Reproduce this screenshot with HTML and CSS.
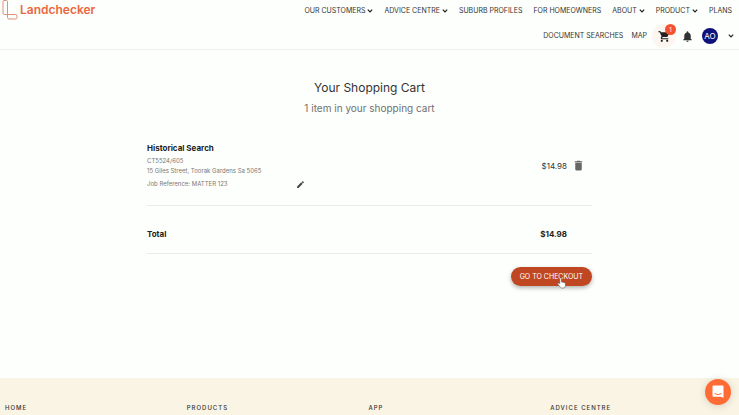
FILE: index.html
```html
<!DOCTYPE html>
<html lang="en">
<head>
  <meta charset="UTF-8" />
  <meta name="viewport" content="width=device-width, initial-scale=1" />
  <title>Landchecker - Shopping Cart</title>
  <link rel="stylesheet" href="styles.css">
</head>
<body>
  <header class="header">
    <a class="logo" href="#">
      <svg class="logo-mark" viewBox="0 0 16 20" aria-hidden="true">
        <path d="M1 1.500Q1 .5 2 .5H4.500Q5.500 .5 5.500 1.500V14.500H13.500Q15 14.500 15 16V17.500Q15 19 13.500 19H7Q5.500 19 5.500 17.500V14.500H2.500Q1 14.500 1 13Z" />
      </svg>
      <span>Landchecker</span>
    </a>
    <div class="menus">
      <nav class="nav">
        <a href="#">OUR CUSTOMERS <svg class="chevron" viewBox="0 0 6 4"><path d="M.8.7 3 2.900 5.200.7" /></svg></a>
        <a href="#">ADVICE CENTRE <svg class="chevron" viewBox="0 0 6 4"><path d="M.8.7 3 2.900 5.200.7" /></svg></a>
        <a href="#">SUBURB PROFILES</a>
        <a href="#">FOR HOMEOWNERS</a>
        <a href="#">ABOUT <svg class="chevron" viewBox="0 0 6 4"><path d="M.8.7 3 2.900 5.200.7" /></svg></a>
        <a href="#">PRODUCT <svg class="chevron" viewBox="0 0 6 4"><path d="M.8.7 3 2.900 5.200.7" /></svg></a>
        <a href="#">PLANS</a>
      </nav>
      <nav class="nav user-nav">
        <a href="#">DOCUMENT SEARCHES</a>
        <a href="#">MAP</a>
        <div class="tools">
          <button class="cart-button" type="button" aria-label="Cart">
            <svg viewBox="0 0 24 24"><path d="M7 18c-1.100 0-2 .9-2 2s.9 2 2 2 2-.9 2-2-.9-2-2-2zM1 2v2h2l3.600 7.600-1.350 2.450C4.500 15.370 5.480 17 7 17h12v-2H7.400l1.150-2h7.450c.75 0 1.410-.41 1.750-1.030L21.700 4H5.200l-.94-2H1zm16 16c-1.100 0-2 .9-2 2s.9 2 2 2 2-.9 2-2-.9-2-2-2z" /></svg>
            <span class="badge">1</span>
          </button>
          <button class="icon-button" type="button" aria-label="Notifications">
            <svg viewBox="0 0 24 24"><path d="M12 22c1.100 0 2-.9 2-2h-4c0 1.100.9 2 2 2zm6-6v-5c0-3.070-1.640-5.640-4.500-6.320V4a1.500 1.500 0 0 0-3 0v.68C7.630 5.360 6 7.920 6 11v5l-2 2v1h16v-1l-2-2z" /></svg>
          </button>
          <button class="account" type="button" aria-label="Account menu">
            <span class="avatar">AO</span>
            <svg class="chevron" viewBox="0 0 6 4"><path d="M.8.7 3 2.900 5.200.7" /></svg>
          </button>
        </div>
      </nav>
    </div>
  </header>

  <main class="cart">
    <h1>Your Shopping Cart</h1>
    <p class="subtitle">1 item in your shopping cart</p>

    <section class="item">
      <div class="item-info">
        <h2>Historical Search</h2>
        <p>CT5524/605</p>
        <p>15 Giles Street, Toorak Gardens Sa 5065</p>
        <div class="reference">
          <span>Job Reference: MATTER 123</span>
          <button class="icon-button edit" type="button" aria-label="Edit job reference">
            <svg viewBox="0 0 24 24"><path d="M3 17.250V21h3.750L17.810 9.940l-3.750-3.750L3 17.250zM20.710 7.040a1 1 0 0 0 0-1.410l-2.340-2.340a1 1 0 0 0-1.410 0l-1.830 1.830 3.750 3.750 1.830-1.830z" /></svg>
          </button>
        </div>
      </div>
      <span class="price">$14.98</span>
      <button class="icon-button delete" type="button" aria-label="Remove item">
        <svg viewBox="0 0 24 24"><path d="M6 19c0 1.100.9 2 2 2h8c1.100 0 2-.9 2-2V7H6v12zM19 4h-3.500l-1-1h-5l-1 1H5v2h14V4z" /></svg>
      </button>
    </section>

    <section class="total">
      <span>Total</span>
      <span>$14.98</span>
    </section>

    <div class="actions">
      <button class="checkout" type="button">
        GO TO CHECKOUT
        <svg class="pointer" viewBox="0 0 16 20" aria-hidden="true"><path d="M5 11V2.500a1.500 1.500 0 0 1 3 0V8l5 1.200q2 .6 2 2.800v3q0 4-4 4H8.500Q7 19 6 17.500L1.500 12q-.8-1.500.5-2t3 1z" /></svg>
      </button>
    </div>
  </main>

  <footer class="footer">
    <h3>HOME</h3>
    <h3>PRODUCTS</h3>
    <h3>APP</h3>
    <h3>ADVICE CENTRE</h3>
  </footer>

  <button class="chat" type="button" aria-label="Open chat">
    <svg viewBox="0 0 12 14"><path class="chat-box" d="M1.500.5h9q1 0 1 1V13L9 11.800H1.500q-1 0-1-1V1.500q0-1 1-1z" /><path class="chat-smile" d="M2.500 8.500q3.500 2.400 7 0" /></svg>
  </button>
</body>
</html>
```
FILE: styles.css
```css
* {
  box-sizing: border-box;
}
body {
  font-family: Inter, 'Liberation Sans', sans-serif;
  font-size: 7px;
  line-height: 10px;
  color: #333;
  background: #fdfffc;
  margin: 0;
  min-height: 100vh;
  display: flex;
  flex-direction: column;
}
h1, h2, h3, p {
  margin: 0;
  font-weight: 400;
}
a {
  color: inherit;
  text-decoration: none;
}
button {
  font: inherit;
  color: inherit;
  background: none;
  border: none;
  padding: 0;
  cursor: pointer;
}
svg {
  display: block;
  fill: currentColor;
}
.header {
  display: flex;
  justify-content: space-between;
  align-items: flex-start;
  padding: 0 5px 0 2px;
  border-bottom: 1px solid #eef0ee;
}
.logo {
  display: flex;
  align-items: center;
  gap: 2px;
  height: 20px;
  font-size: 12px;
  font-weight: 600;
  color: #e9683f;
}
.logo-mark {
  width: 16px;
  height: 20px;
  fill: none;
  stroke: #dd9078;
  stroke-width: 1;
}
.nav {
  display: flex;
  justify-content: flex-end;
  align-items: center;
  gap: 11px;
  height: 21px;
  padding-right: 2px;
}
.nav a {
  display: flex;
  align-items: center;
  gap: 2px;
}
.chevron {
  width: 6px;
  height: 4px;
  fill: none;
  stroke: #222;
  stroke-width: 1.2;
}
.user-nav {
  gap: 8px;
  height: 28px;
  padding: 2px 0 0;
}
.tools {
  display: flex;
  align-items: center;
  gap: 8px;
}
.icon-button svg {
  width: 13px;
  height: 13px;
}
.cart-button {
  position: relative;
  display: flex;
  align-items: center;
  justify-content: center;
  width: 24px;
  height: 24px;
  margin: 0 -3px;
  border-radius: 50%;
  background: #fdf5ef;
  color: #222;
}
.cart-button svg {
  width: 13px;
  height: 13px;
}
.badge {
  position: absolute;
  top: 0;
  right: 0;
  width: 11px;
  height: 11px;
  border-radius: 50%;
  background: #f4512f;
  color: #fff;
  font-size: 6px;
  line-height: 11px;
}
.account {
  display: flex;
  align-items: center;
  gap: 10px;
}
.avatar {
  width: 16px;
  height: 16px;
  border-radius: 50%;
  background: #10127c;
  color: #fff;
  font-size: 8px;
  line-height: 16px;
}
.cart {
  flex: 1;
  width: 100%;
  max-width: 445px;
  margin: 0 auto;
  padding-top: 28px;
}
.cart h1 {
  font-size: 12px;
  line-height: 20px;
  text-align: center;
}
.subtitle {
  margin-top: 1px;
  font-size: 10px;
  line-height: 18px;
  text-align: center;
  color: #707070;
}
.item {
  display: flex;
  align-items: center;
  margin-top: 25px;
  padding-bottom: 16px;
  border-bottom: 1px solid #e9ecee;
}
.item-info {
  flex: 1;
  font-size: 6px;
  color: #777;
}
.item-info h2 {
  margin-bottom: 2px;
  font-size: 8px;
  line-height: 12px;
  font-weight: 700;
  color: #222;
}
.reference {
  display: flex;
  justify-content: space-between;
  align-items: center;
  width: 158px;
  margin-top: 3px;
}
.edit svg {
  width: 9px;
  height: 9px;
  color: #444;
}
.price {
  font-size: 8px;
}
.delete {
  margin: 0 7px 0 5px;
  color: #666;
}
.total {
  display: flex;
  justify-content: space-between;
  padding: 22px 25px 13px 0;
  border-bottom: 1px solid #e9ecee;
  font-size: 8px;
  line-height: 12px;
  font-weight: 700;
  color: #222;
}
.actions {
  display: flex;
  justify-content: flex-end;
  padding: 13px 0 24px;
}
.checkout {
  position: relative;
  height: 19px;
  padding: 0 9px;
  border-radius: 10px;
  background: #bf4722;
  color: #fff;
  box-shadow: 0 2px 4px rgba(0,0,0,0.3);
}
.pointer {
  position: absolute;
  right: 26px;
  bottom: -3px;
  width: 9px;
  height: 12px;
  fill: #fff;
  stroke: #555;
  stroke-width: 1;
}
.footer {
  display: grid;
  grid-template-columns: repeat(4, 1fr);
  padding: 24px 7px 2px 5px;
  background: #faf4e5;
}
.footer h3 {
  font-size: 6px;
  line-height: 11px;
  font-weight: 500;
  letter-spacing: 1px;
}
.chat {
  position: fixed;
  right: 8px;
  bottom: 10px;
  display: flex;
  align-items: center;
  justify-content: center;
  width: 26px;
  height: 26px;
  border-radius: 50%;
  background: #ff6b35;
  box-shadow: 0 1px 8px rgba(0,0,0,0.15);
}
.chat svg {
  width: 12px;
  height: 14px;
}
.chat-box {
  fill: #fff;
}
.chat-smile {
  fill: none;
  stroke: #ff6b35;
}
```
